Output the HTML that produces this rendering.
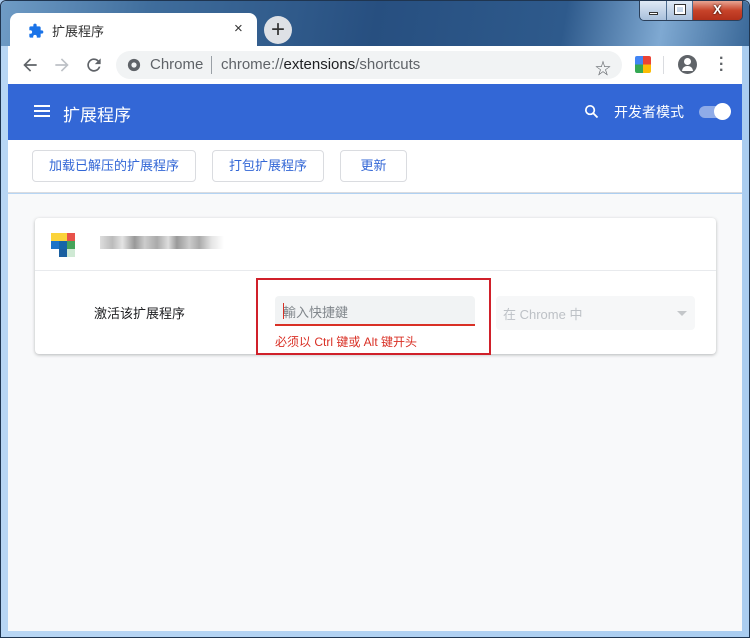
<!DOCTYPE html>
<html><head><meta charset="utf-8"><style>
*{margin:0;padding:0;box-sizing:border-box}
body{width:750px;height:638px;overflow:hidden;font-family:"Liberation Sans","Noto Sans CJK SC",sans-serif;background:#a9cbee;position:relative}
.abs{position:absolute}
</style></head><body>
<div class="abs" style="left:0;top:0;width:750px;height:638px;border:1px solid #1f3550;border-radius:6px 6px 0 0;background:linear-gradient(90deg,#b8d6f4,#aacdf0)"></div>
<div class="abs" style="left:1px;top:1px;width:748px;height:45px;border-radius:6px 6px 0 0;background:linear-gradient(100deg,#6f9cc6 0%,#3f6d9c 20%,#274f80 50%,#2e5a8c 75%,#7fa9d2 88%,#3a6898 100%)"></div>
<div class="abs" style="left:639px;top:1px;width:104px;height:20px;border:1px solid #2a3f5a;border-top:none;border-radius:0 0 5px 5px;overflow:hidden;display:flex">
<div style="width:27px;background:linear-gradient(#dfe9f5,#a9c0dc);border-right:1px solid #4d6c90;position:relative"><div class="abs" style="left:9px;top:11px;width:9px;height:3px;background:#fff;border:1px solid #333"></div></div>
<div style="width:26px;background:linear-gradient(#dfe9f5,#a9c0dc);border-right:1px solid #4d6c90;position:relative"><div class="abs" style="left:8px;top:4px;width:10px;height:9px;border:2px solid #fff;outline:1px solid #333"></div></div>
<div style="flex:1;background:linear-gradient(#e8a593,#c7432a 50%,#b2301b);color:#fff;font:bold 13px 'Liberation Sans';text-align:center;line-height:18px;text-shadow:0 0 2px #000">X</div>
</div>
<div class="abs" style="left:10px;top:13px;width:247px;height:34px;background:#fff;border-radius:8px 8px 0 0"></div>
<svg class="abs" style="left:28px;top:23px" width="16" height="16" viewBox="0 0 24 24"><path fill="#1a73e8" d="M20.5 11H19V7c0-1.1-.9-2-2-2h-4V3.5a2.5 2.5 0 0 0-5 0V5H4c-1.1 0-2 .9-2 2v3.8h1.5a2.7 2.7 0 0 1 0 5.4H2V20c0 1.1.9 2 2 2h3.8v-1.5a2.7 2.7 0 0 1 5.4 0V22H17c1.1 0 2-.9 2-2v-4h1.5a2.5 2.5 0 0 0 0-5z"/></svg>
<div class="abs" style="left:52px;top:21px;font-size:13px;color:#333">扩展程序</div>
<div class="abs" style="left:234px;top:20px;font-size:15px;color:#333">×</div>
<div class="abs" style="left:264px;top:16px;width:28px;height:28px;border-radius:50%;background:#dee1e6;color:#333;font-size:24px;line-height:27px;text-align:center">+</div>
<div class="abs" style="left:8px;top:46px;width:734px;height:38px;background:#fff"></div>
<svg class="abs" style="left:20px;top:55px" width="20" height="20" viewBox="0 0 24 24"><path d="M20 11H7.8l5.6-5.6L12 4l-8 8 8 8 1.4-1.4L7.8 13H20z" fill="#5f6368"/></svg>
<svg class="abs" style="left:52px;top:55px" width="20" height="20" viewBox="0 0 24 24"><path d="M4 11h12.2l-5.6-5.6L12 4l8 8-8 8-1.4-1.4 5.6-5.6H4z" fill="#bdc1c6"/></svg>
<svg class="abs" style="left:84px;top:55px" width="20" height="20" viewBox="0 0 24 24"><path d="M17.6 6.4A8 8 0 1 0 19.7 14h-2.1a6 6 0 1 1-1.4-6.2L13 11h7V4z" fill="#5f6368"/></svg>
<div class="abs" style="left:116px;top:51px;width:506px;height:28px;border-radius:14px;background:#f1f3f4"></div>
<svg class="abs" style="left:127px;top:58px" width="14" height="14" viewBox="0 0 16 16"><circle cx="8" cy="8" r="7" fill="#5f6368"/><circle cx="8" cy="8" r="3" fill="#f1f3f4"/></svg>
<div class="abs" style="left:150px;top:56px;font-size:15px;color:#5f6368">Chrome</div>
<div class="abs" style="left:211px;top:56px;width:1px;height:18px;background:#9aa0a6"></div>
<div class="abs" style="left:221px;top:56px;font-size:15px;color:#5f6368">chrome://<span style="color:#202124">extensions</span>/shortcuts</div>
<div class="abs" style="left:595px;top:55px;font-size:16px;color:#5f6368">☆</div>
<div class="abs" style="left:635px;top:56px;width:16px;height:17px;border-radius:2px;background:conic-gradient(#ea4335 0 25%,#fbbc05 0 50%,#34a853 0 75%,#4285f4 0)"></div>
<div class="abs" style="left:663px;top:56px;width:1px;height:18px;background:#dadce0"></div>
<div class="abs" style="left:678px;top:55px;width:19px;height:19px;border-radius:50%;background:#5f6368"></div>
<div class="abs" style="left:684px;top:58px;width:7px;height:7px;border-radius:50%;background:#fff"></div>
<div class="abs" style="left:682px;top:66px;width:11px;height:5px;border-radius:6px 6px 0 0;background:#fff"></div>
<div class="abs" style="left:719px;top:56px;font-size:16px;font-weight:bold;color:#5f6368;line-height:6px">·<br>·<br>·</div>
<div class="abs" style="left:8px;top:84px;width:734px;height:56px;background:#3367d6"></div>
<div class="abs" style="left:34px;top:105px;width:16px;height:2px;background:#fff;box-shadow:0 5px 0 #fff,0 10px 0 #fff"></div>
<div class="abs" style="left:63px;top:101px;font-size:17px;color:#fff">扩展程序</div>
<svg class="abs" style="left:583px;top:103px" width="17" height="17" viewBox="0 0 24 24"><circle cx="10" cy="10" r="6" fill="none" stroke="#fff" stroke-width="2.4"/><path d="M14.5 14.5l6 6" stroke="#fff" stroke-width="2.6"/></svg>
<div class="abs" style="left:614px;top:102px;font-size:14px;color:#fff">开发者模式</div>
<div class="abs" style="left:699px;top:106px;width:28px;height:12px;border-radius:6px;background:#8fabe8"></div>
<div class="abs" style="left:714px;top:103px;width:17px;height:17px;border-radius:50%;background:#fff"></div>
<div class="abs" style="left:8px;top:140px;width:734px;height:53px;background:#fff;border-bottom:1px solid #dadce0"></div>
<div class="abs" style="left:32px;top:150px;width:164px;height:32px;border:1px solid #dadce0;border-radius:4px;color:#3367d6;font-size:13px;text-align:center;line-height:30px">加载已解压的扩展程序</div>
<div class="abs" style="left:212px;top:150px;width:112px;height:32px;border:1px solid #dadce0;border-radius:4px;color:#3367d6;font-size:13px;text-align:center;line-height:30px">打包扩展程序</div>
<div class="abs" style="left:340px;top:150px;width:67px;height:32px;border:1px solid #dadce0;border-radius:4px;color:#3367d6;font-size:13px;text-align:center;line-height:30px">更新</div>
<div class="abs" style="left:8px;top:194px;width:734px;height:437px;background:#f8f9fa"></div>
<div class="abs" style="left:35px;top:218px;width:681px;height:136px;background:#fff;border-radius:4px;box-shadow:0 1px 3px rgba(60,64,67,.35)"></div>
<div class="abs" style="left:35px;top:270px;width:681px;height:1px;background:#e8eaed"></div>
<div class="abs" style="left:51px;top:233px;width:24px;height:24px">
<div class="abs" style="left:0;top:0;width:16px;height:8px;background:#fbd33a"></div>
<div class="abs" style="left:16px;top:0;width:8px;height:8px;background:#e8524a"></div>
<div class="abs" style="left:0;top:8px;width:8px;height:8px;background:#1a73c8"></div>
<div class="abs" style="left:8px;top:8px;width:8px;height:8px;background:#1565a8"></div>
<div class="abs" style="left:16px;top:8px;width:8px;height:8px;background:#46a35a"></div>
<div class="abs" style="left:8px;top:16px;width:8px;height:8px;background:#1a5fa0"></div>
<div class="abs" style="left:16px;top:16px;width:8px;height:8px;background:#cfe9d4"></div>
</div>
<div class="abs" style="left:100px;top:236px;width:124px;height:13px;background:linear-gradient(90deg,#ddd,#bbb 10%,#e4e4e4 18%,#999 28%,#ccc 36%,#aaa 46%,#ddd 55%,#999 62%,#ccc 72%,#aaa 80%,#e5e5e5 90%,#fff)"></div>
<div class="abs" style="left:94px;top:303px;font-size:13px;color:#202124">激活该扩展程序</div>
<div class="abs" style="left:275px;top:296px;width:200px;height:30px;background:#f1f3f4;border-radius:4px 4px 0 0;border-bottom:2px solid #d93025"></div>
<div class="abs" style="left:283px;top:302px;font-size:13px;color:#80868b">輸入快捷鍵</div>
<div class="abs" style="left:283px;top:303px;width:1px;height:16px;background:#d93025"></div>
<div class="abs" style="left:275px;top:333px;font-size:12px;color:#d93025">必须以 Ctrl 键或 Alt 键开头</div>
<div class="abs" style="left:496px;top:296px;width:199px;height:34px;background:#f6f7f8;border-radius:4px"></div>
<div class="abs" style="left:503px;top:304px;font-size:13px;color:#bdc1c6">在 Chrome 中</div>
<div class="abs" style="left:677px;top:311px;border:5px solid transparent;border-top-color:#c4c7ca"></div>
<div class="abs" style="left:256px;top:278px;width:235px;height:77px;border:2px solid #d0202a"></div>
</body></html>
